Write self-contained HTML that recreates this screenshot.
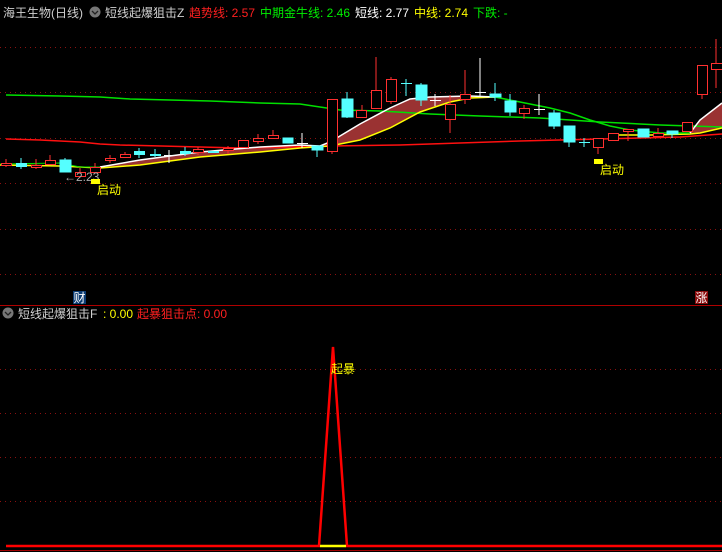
<!DOCTYPE html>
<html><head><meta charset="utf-8"><style>
html,body{margin:0;padding:0;background:#000;width:722px;height:552px;overflow:hidden}
svg{display:block}
text{font-family:"Liberation Sans","Noto Sans CJK SC",sans-serif;font-size:12px}
</style></head><body>
<svg width="722" height="552" viewBox="0 0 722 552" xmlns="http://www.w3.org/2000/svg">
<g stroke="#8a1010" stroke-width="1" stroke-dasharray="1,4">
<line x1="0" y1="47.5" x2="722" y2="47.5"/><line x1="0" y1="92.5" x2="722" y2="92.5"/>
<line x1="0" y1="138.5" x2="722" y2="138.5"/><line x1="0" y1="183.5" x2="722" y2="183.5"/>
<line x1="0" y1="229.5" x2="722" y2="229.5"/><line x1="0" y1="274.5" x2="722" y2="274.5"/>
<line x1="0" y1="369.5" x2="722" y2="369.5"/><line x1="0" y1="413.5" x2="722" y2="413.5"/>
<line x1="0" y1="457.5" x2="722" y2="457.5"/><line x1="0" y1="501.5" x2="722" y2="501.5"/>
</g>
<line x1="0" y1="305.5" x2="722" y2="305.5" stroke="#b00000"/>
<!-- fill between short and mid -->
<path d="M100 167 L140 160 L200 152 L260 147 L300 145 L320 146 L330 142 L360 124 L390 108 L410 99 L430 97 L470 96 L495 97 L470 98 L450 102 L420 112 L390 128 L360 140 L330 146 L300 148 L260 152 L200 157 L140 165 Z" fill="#9a3232"/>
<path d="M690 133 L700 120 L722 103 L722 128 L700 133 Z" fill="#9a3232"/>
<!-- long green -->
<polyline points="6,95 60,96 100,97 130,99 170,100 210,101 260,103 300,104 340,110 380,111 430,114 480,116 540,118 600,122 660,125 722,127" fill="none" stroke="#00e000" stroke-width="1.5"/>
<!-- red MA -->
<polyline points="6,139 40,140 80,142 100,144 120,145 200,147 240,148 330,146 400,145 460,143 520,141 600,139 680,137 722,134" fill="none" stroke="#ff1010" stroke-width="1.5"/>
<!-- yellow mid -->
<polyline points="0,165 60,166 100,168 140,165 200,157 260,152 300,148 330,146 360,140 390,128 420,112 450,102 470,98 495,97" fill="none" stroke="#ffff00" stroke-width="1.5"/>
<polyline points="610,135 650,135 690,134 700,133 722,128" fill="none" stroke="#ffff00" stroke-width="1.5"/>
<!-- green falling short -->
<polyline points="495,97 520,102 550,108 570,113 590,120 610,126 630,130 660,133 690,133" fill="none" stroke="#00e000" stroke-width="1.5"/>
<polyline points="0,164 60,163 80,167 100,167" fill="none" stroke="#00e000" stroke-width="1"/>
<!-- white short -->
<polyline points="100,167 140,160 200,152 260,147 300,145 320,146 330,142 360,124 390,108 410,99 430,97 470,96 495,97" fill="none" stroke="#fff" stroke-width="1.5"/>
<polyline points="690,133 700,120 722,103" fill="none" stroke="#fff" stroke-width="1.5"/>
<!-- candles -->
<g stroke="#ff3030" fill="#000" stroke-width="1">
<line x1="6" y1="159" x2="6" y2="167"/><rect x="1.5" y="163.5" width="10" height="2"/>
<line x1="36" y1="159" x2="36" y2="169"/><rect x="31.5" y="165.5" width="10" height="2"/>
<line x1="50" y1="155" x2="50" y2="165"/><rect x="45.5" y="160.5" width="10" height="4"/>
<line x1="80" y1="168" x2="80" y2="176"/><rect x="75.5" y="172.5" width="10" height="4"/>
<line x1="95" y1="163" x2="95" y2="173"/><rect x="90.5" y="167.5" width="10" height="5"/>
<line x1="110" y1="155" x2="110" y2="163"/><rect x="105.5" y="158.5" width="10" height="2"/>
<line x1="125" y1="152" x2="125" y2="158"/><rect x="120.5" y="154.5" width="10" height="3"/>
<line x1="198" y1="147" x2="198" y2="155"/><rect x="193.5" y="149.5" width="10" height="3"/>
<line x1="228" y1="146" x2="228" y2="154"/><rect x="223.5" y="148.5" width="10" height="2"/>
<rect x="238.5" y="140.5" width="10" height="7"/>
<line x1="258" y1="134" x2="258" y2="144"/><rect x="253.5" y="138.5" width="10" height="3"/>
<line x1="273" y1="130" x2="273" y2="139"/><rect x="268.5" y="135.5" width="10" height="3"/>
<line x1="332" y1="152" x2="332" y2="154"/><rect x="327.5" y="99.5" width="10" height="52"/>
<line x1="362" y1="105" x2="362" y2="118"/><rect x="356.5" y="110.5" width="10" height="7"/>
<line x1="376" y1="57" x2="376" y2="108"/><rect x="371.5" y="90.5" width="10" height="18"/>
<line x1="391" y1="77" x2="391" y2="104"/><rect x="386.5" y="79.5" width="10" height="22"/>
<line x1="450" y1="95" x2="450" y2="133"/><rect x="445.5" y="104.5" width="10" height="15"/>
<line x1="465" y1="70" x2="465" y2="104"/><rect x="460.5" y="94.5" width="10" height="5"/>
<line x1="524" y1="105" x2="524" y2="119"/><rect x="519.5" y="108.5" width="10" height="5"/>
<line x1="598" y1="147" x2="598" y2="154"/><rect x="593.5" y="138.5" width="10" height="9"/>
<rect x="608.5" y="133.5" width="10" height="7"/>
<line x1="628" y1="129" x2="628" y2="141"/><rect x="623.5" y="129.5" width="10" height="2"/>
<line x1="658" y1="128" x2="658" y2="137"/><rect x="653.5" y="133.5" width="10" height="3"/>
<rect x="682.5" y="122.5" width="10" height="9"/>
<line x1="702" y1="94" x2="702" y2="99"/><rect x="697.5" y="65.5" width="10" height="29"/>
<line x1="716" y1="39" x2="716" y2="88"/><rect x="711.5" y="63.5" width="11" height="6"/>
</g>
<g stroke="#55ffff" fill="#55ffff" stroke-width="1">
<line x1="21" y1="158" x2="21" y2="169"/><rect x="16.5" y="163.5" width="10" height="3"/>
<line x1="65" y1="158" x2="65" y2="172"/><rect x="60" y="160" width="11" height="12"/>
<line x1="139" y1="148" x2="139" y2="158"/><rect x="134.5" y="151.5" width="10" height="3"/>
<line x1="155" y1="149" x2="155" y2="157"/><rect x="150.5" y="154.5" width="10" height="1"/>
<line x1="185" y1="147" x2="185" y2="156"/><rect x="180.5" y="151.5" width="10" height="2"/>
<rect x="208.5" y="151.5" width="10" height="1"/>
<rect x="283" y="138" width="10" height="5"/>
<line x1="317" y1="146" x2="317" y2="157"/><rect x="312" y="146" width="11" height="4"/>
<line x1="347" y1="92" x2="347" y2="118"/><rect x="342" y="99" width="11" height="18"/>
<line x1="406" y1="79" x2="406" y2="96"/><line x1="401" y1="83.5" x2="412" y2="83.5"/>
<line x1="421" y1="83" x2="421" y2="106"/><rect x="416" y="85" width="11" height="15"/>
<line x1="495" y1="83" x2="495" y2="101"/><rect x="490" y="94" width="11" height="3"/>
<line x1="510" y1="94" x2="510" y2="116"/><rect x="505" y="101" width="11" height="11"/>
<line x1="554" y1="110" x2="554" y2="129"/><rect x="549" y="113" width="11" height="13"/>
<line x1="569" y1="126" x2="569" y2="147"/><rect x="564" y="126" width="11" height="16"/>
<line x1="584" y1="138" x2="584" y2="147"/><line x1="579" y1="142.5" x2="590" y2="142.5"/>
<rect x="638" y="129" width="11" height="8"/>
<line x1="672" y1="131" x2="672" y2="138"/><rect x="667" y="131" width="11" height="3"/>
</g>
<g stroke="#fff" stroke-width="1">
<line x1="169" y1="150" x2="169" y2="163"/><line x1="164" y1="155.5" x2="175" y2="155.5"/>
<line x1="302" y1="133" x2="302" y2="148"/><line x1="297" y1="143.5" x2="308" y2="143.5"/>
<line x1="435" y1="94" x2="435" y2="106"/><line x1="430" y1="100.5" x2="441" y2="100.5"/>
<line x1="480" y1="58" x2="480" y2="97"/><line x1="475" y1="92.5" x2="486" y2="92.5"/>
<line x1="539" y1="94" x2="539" y2="115"/><line x1="534" y1="109.5" x2="545" y2="109.5"/>
</g>
<text x="64" y="181" fill="#aaa" font-size="11">←2.23</text>
<rect x="91" y="179" width="9" height="5" fill="#ffff00"/>
<text x="97" y="194" fill="#ffff00">启动</text>
<rect x="594" y="159" width="9" height="5" fill="#ffff00"/>
<text x="600" y="174" fill="#ffff00">启动</text>
<rect x="73" y="291" width="13" height="13" fill="#0c3c72"/>
<text x="73.5" y="302" fill="#fff" font-size="11">财</text>
<rect x="695" y="291" width="13" height="13" fill="#8a0c0c"/>
<text x="695.5" y="302" fill="#fff" font-size="11">涨</text>
<!-- header -->
<text x="3" y="17" fill="#d0d0d0">海王生物(日线)</text>
<circle cx="95" cy="12" r="5.5" fill="#777"/><path d="M92 11 L95 14 L98 11" stroke="#222" fill="none" stroke-width="1.3"/>
<text x="105" y="17" fill="#d0d0d0">短线起爆狙击Z</text>
<text x="189" y="17" fill="#ff2020">趋势线: 2.57</text>
<text x="260" y="17" fill="#00ee00">中期金牛线: 2.46</text>
<text x="355" y="17" fill="#ffffff">短线: 2.77</text>
<text x="414" y="17" fill="#ffff00">中线: 2.74</text>
<text x="473" y="17" fill="#00ee00">下跌: -</text>
<!-- lower header -->
<circle cx="8" cy="313" r="5.5" fill="#777"/><path d="M5 312 L8 315 L11 312" stroke="#222" fill="none" stroke-width="1.3"/>
<text x="18" y="318" fill="#d0d0d0">短线起爆狙击F</text>
<text x="103" y="318" fill="#ffff00">: 0.00</text>
<text x="137" y="318" fill="#ff2020">起暴狙击点: 0.00</text>
<!-- spike -->
<polyline points="6,546 319,546 333,347 347,546 722,546" fill="none" stroke="#ff0000" stroke-width="2.5"/>
<line x1="320" y1="546" x2="346" y2="546" stroke="#ffff00" stroke-width="2.5"/>
<line x1="0" y1="550.5" x2="722" y2="550.5" stroke="#a00000"/>
<text x="331" y="373" fill="#ffff00">起暴</text>
</svg>
</body></html>
